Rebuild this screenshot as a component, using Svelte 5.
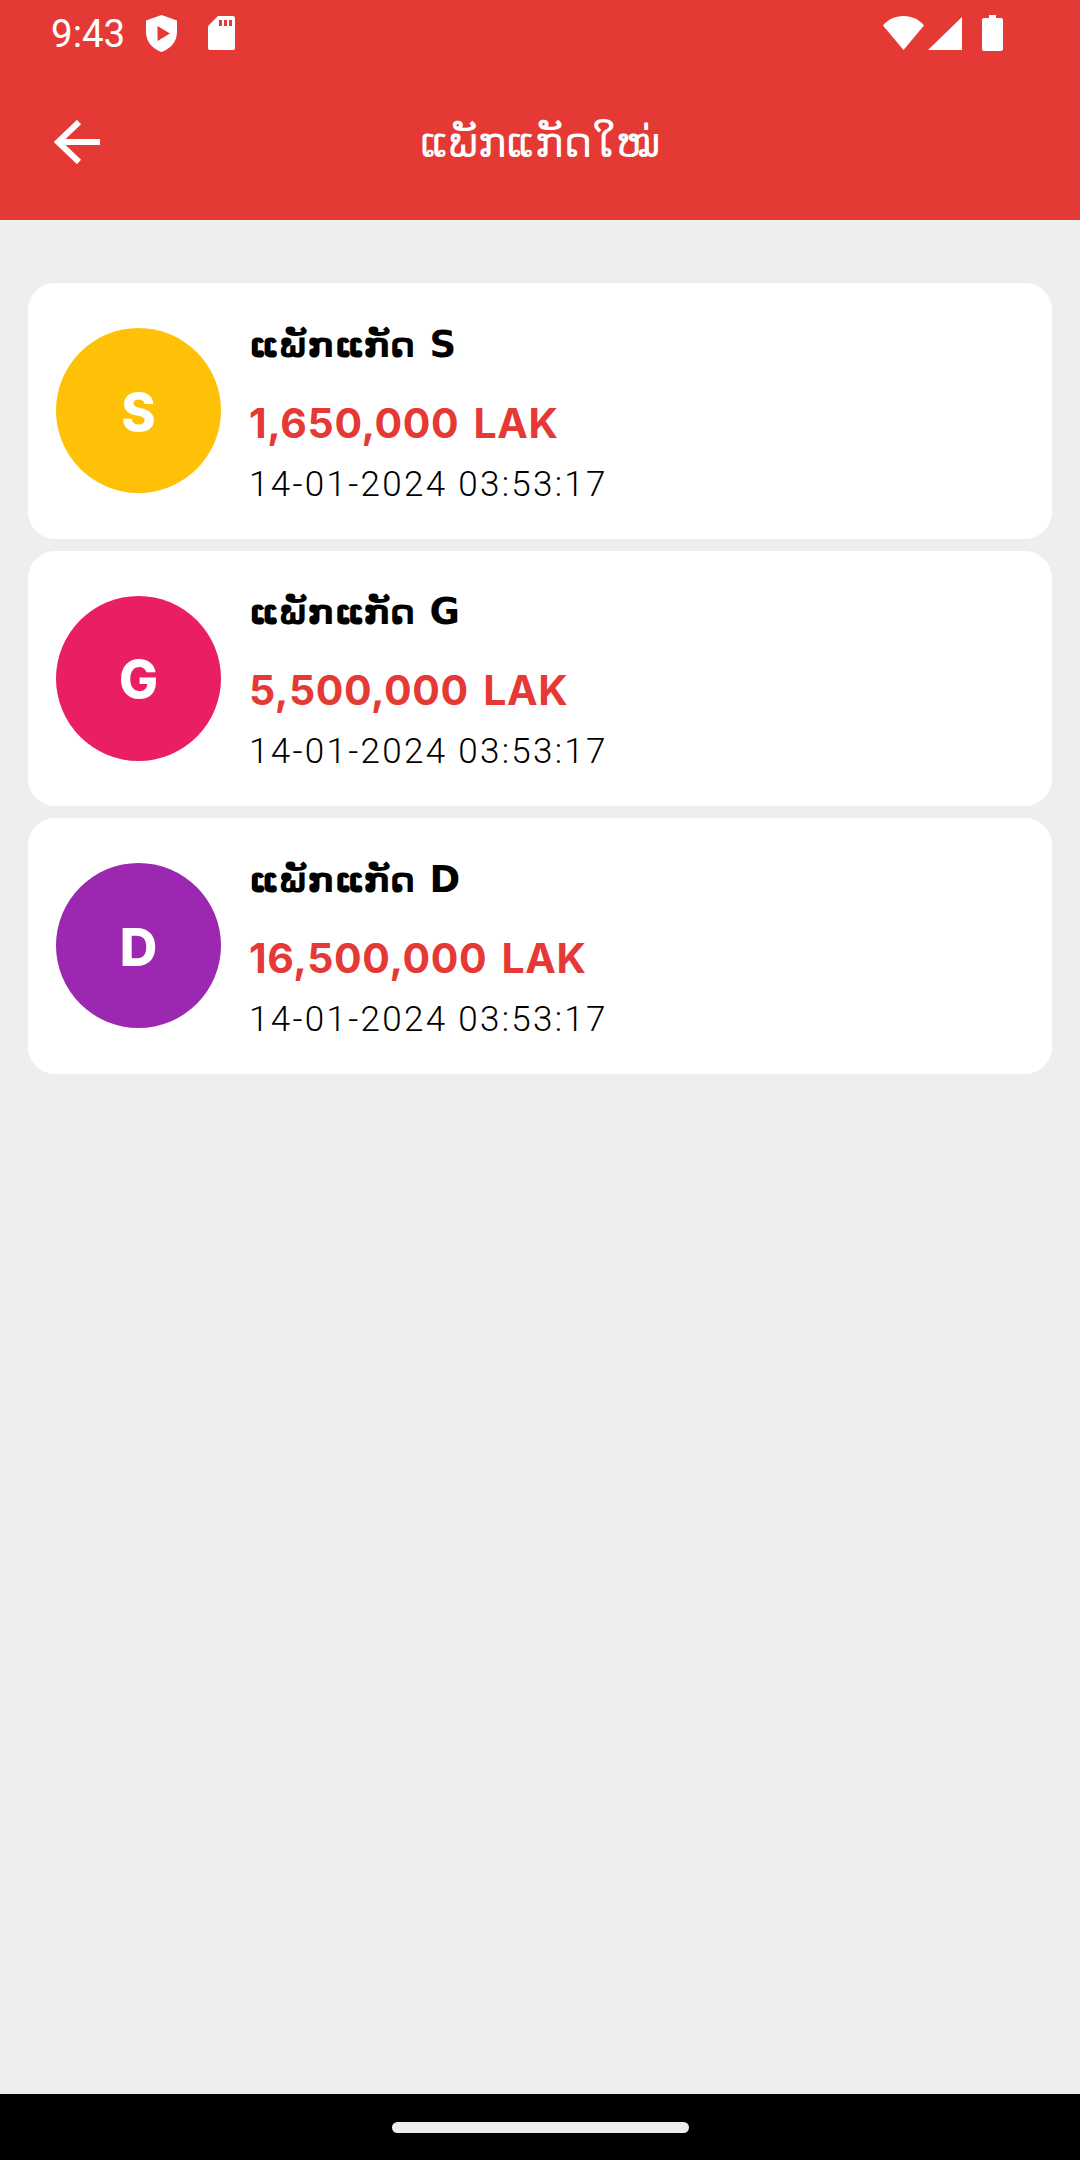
<script>
  const items = [
    { code: 'S', amount: '1,650,000 LAK', color: '#ffc107' },
    { code: 'G', amount: '5,500,000 LAK', color: '#e91e63' },
    { code: 'D', amount: '16,500,000 LAK', color: '#9c27b0' }
  ];
</script>

<div class="page">
  <header class="top">
    <div class="status">
      <span class="time">9:43</span>
      <svg class="shield" viewBox="0 0 31 37" width="31" height="37"><path fill="#fff" fill-rule="evenodd" d="M15.500 0 31 5.500V17C31 27 24 34 15.500 37 7 34 0 27 0 17V5.500ZM11.500 11V26L24 18.500Z"/></svg>
      <svg class="sd" viewBox="0 0 27 34" width="27" height="34"><path fill="#fff" fill-rule="evenodd" d="M10 0H25Q27 0 27 2V32Q27 34 25 34H2Q0 34 0 32V10ZM11 4V10H14V4ZM16 4V10H19V4ZM21 4V10H24V4Z"/></svg>
      <span class="spacer"></span>
      <svg class="wifi" viewBox="0 0 41 34" width="41" height="34"><path fill="#fff" d="M20.500 34 0 9.500C5 3.500 12 0 20.500 0S36 3.500 41 9.500Z"/></svg>
      <svg class="signal" viewBox="0 0 34 33" width="34" height="33"><path fill="#fff" d="M34 0V33H0Z"/></svg>
      <svg class="battery" viewBox="0 0 21 36" width="21" height="36"><path fill="#fff" d="M7 0H14V3H19Q21 3 21 5V34Q21 36 19 36H2Q0 36 0 34V5Q0 3 2 3H7Z"/></svg>
    </div>
    <div class="bar">
      <svg class="back" viewBox="0 0 46 44" width="46" height="44"><path fill="none" stroke="#fff" stroke-width="6" d="M46 22H4M25 2 4 22 25 42"/></svg>
      <h1>ແພັກແກັດໃໝ່</h1>
    </div>
  </header>

  <main class="list">
    {#each items as item}
      <article class="card">
        <div class="avatar" style:background={item.color}>{item.code}</div>
        <div class="info">
          <div class="name">ແພັກແກັດ <span class="code">{item.code}</span></div>
          <div class="amount">{item.amount}</div>
          <div class="date">14-01-2024 03:53:17</div>
        </div>
      </article>
    {/each}
  </main>

  <footer class="nav"><span class="handle"></span></footer>
</div>

<style>
  :global(body) { margin: 0; background: #eeeeee; }
  .page {
    width: 1080px; height: 2160px; display: flex; flex-direction: column;
    background: #eeeeee; font-family: Inter, "DejaVu Sans", sans-serif;
  }
  .top { height: 220px; background: #e53935; color: #fff; flex: none; }
  .status { height: 66px; display: flex; align-items: center; padding: 0 77px 0 51px; }
  .time { font: 400 38.500px Roboto, sans-serif; margin-right: 23px; }
  .shield { margin-right: 32px; margin-left: -2px; }
  .sd { margin-left: -1px; }
  .spacer { flex: 1; }
  .wifi { margin-right: 4px; }
  .signal { margin-right: 20px; }
  .bar { height: 154px; position: relative; display: flex; align-items: center; justify-content: center; }
  .back { position: absolute; left: 54px; top: 54px; }
  h1 { margin: 0 0 2px; font: 400 43px "DejaVu Sans", sans-serif; }
  .list { flex: 1; padding: 63px 28px 0; display: flex; flex-direction: column; gap: 12px; }
  .card {
    height: 255.500px; box-sizing: border-box; background: #fff; border-radius: 27px;
    display: flex; align-items: center; padding: 0 28px; gap: 28px;
  }
  .avatar {
    width: 165px; height: 165px; padding-top: 3px; box-sizing: border-box; border-radius: 50%;
    display: flex; align-items: center; justify-content: center;
    color: #fff; font-weight: 800; font-size: 52px;
  }
  .info { display: flex; flex-direction: column; padding-top: 16px; }
  .name { font: 700 34px/44px "DejaVu Sans", sans-serif; color: #000; margin-top: -8px; white-space: pre; }
  .code { font-size: 37px; margin-left: 3px; }
  .amount { font-weight: 700; font-size: 41px; line-height: 50px; color: #e53935; margin-top: 31px; letter-spacing: .6px; word-spacing: 4px; }
  .date { font: 300 35px/44px Roboto, sans-serif; color: #000; letter-spacing: 2.300px; margin-top: 15px; }
  .nav { height: 66px; background: #000; flex: none; display: flex; align-items: center; justify-content: center; }
  .handle { width: 297px; height: 11px; background: #eeeeee; border-radius: 6px; }
</style>
